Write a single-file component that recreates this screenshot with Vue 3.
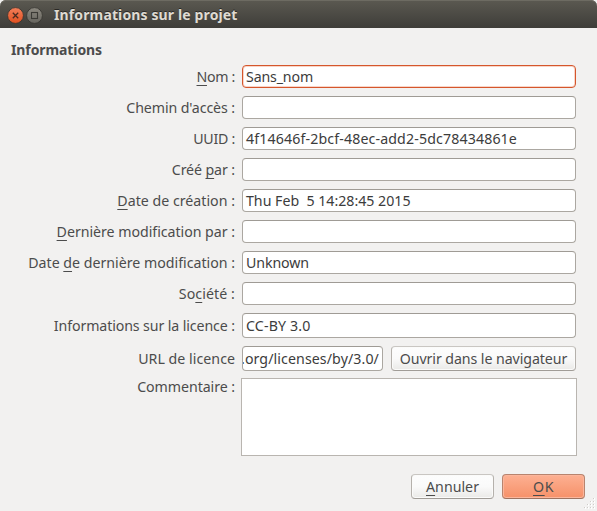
<script setup>
const rows = [
  { pre: '', key: 'N', post: 'om :', w: 38.5, value: 'Sans_nom', vw: 67, focus: true },
  { pre: "Chemin d'accès :", w: 108.7, value: '' },
  { pre: 'UUID :', w: 41.8, value: '4f14646f-2bcf-48ec-add2-5dc78434861e', vw: 271 },
  { pre: 'Créé ', key: 'p', post: 'ar :', w: 63.2, value: '' },
  { pre: '', key: 'D', post: 'ate de création :', w: 117.7, value: 'Thu Feb  5 14:28:45 2015', vw: 164.5 },
  { pre: '', key: 'D', post: 'ernière modification par :', w: 178.4, value: '' },
  { pre: 'Date ', key: 'd', post: 'e dernière modification :', w: 206.8, value: 'Unknown', vw: 63 },
  { pre: 'So', key: 'c', post: 'iété :', w: 56.2, value: '' },
  { pre: 'Informations sur la licence :', w: 181.2, value: 'CC-BY 3.0', vw: 64.5, tall: true }
]

// Tracks a text run so that it fills the given width in pixels.
const vFit = {
  mounted(el, { value }) {
    if (!value) return
    const apply = () => {
      el.style.letterSpacing = '0px'
      const natural = el.getBoundingClientRect().width
      el.style.letterSpacing = `${(value - natural) / el.textContent.length}px`
    }
    apply()
    document.fonts?.ready.then(apply)
  }
}
</script>

<template>
  <div class="window">
    <header class="titlebar">
      <svg class="controls" width="40" height="20" viewBox="0 0 40 20">
        <defs>
          <linearGradient id="close" x1="0" y1="0" x2="0" y2="1">
            <stop offset="0" stop-color="#f37f5a" />
            <stop offset="1" stop-color="#e2501f" />
          </linearGradient>
          <linearGradient id="max" x1="0" y1="0" x2="0" y2="1">
            <stop offset="0" stop-color="#8b887f" />
            <stop offset="1" stop-color="#67655e" />
          </linearGradient>
        </defs>
        <circle cx="10.5" cy="10.5" r="7.9" fill="url(#close)" stroke="#35342f" stroke-width=".8" />
        <path d="M7.8 7.8l5.4 5.4M13.2 7.8l-5.4 5.4" stroke="#4a2b20" stroke-width="1.3" />
        <circle cx="29.5" cy="10.5" r="7.9" fill="url(#max)" stroke="#35342f" stroke-width=".8" />
        <rect x="26.5" y="7.5" width="6" height="6" fill="none" stroke="#3b3a35" stroke-width="1.1" />
      </svg>
      <span v-fit="183.5" class="title">Informations sur le projet</span>
    </header>

    <main class="content">
      <h1 class="heading"><span v-fit="91">Informations</span></h1>

      <div class="form">
        <div v-for="(r, i) in rows" :key="i" class="row">
          <label class="label"><span v-fit="r.w" class="text">{{ r.pre }}<u v-if="r.key">{{ r.key }}</u>{{ r.post }}</span></label>
          <div class="field" :class="{ focus: r.focus, tall: r.tall }"><span v-fit="r.vw" class="text">{{ r.value }}</span></div>
        </div>
        <div class="row">
          <label class="label"><span v-fit="96.8" class="text">URL de licence</span></label>
          <div class="field tall url"><span v-fit="138" class="text">.org/licenses/by/3.0/</span></div>
          <button class="button browse"><span v-fit="167.5" class="text">Ouvrir dans le navigateur</span></button>
        </div>
        <div class="row comment">
          <label class="label"><span v-fit="97.8" class="text">Commentaire :</span></label>
          <div class="area"></div>
        </div>
      </div>

      <footer class="actions">
        <button class="button"><span v-fit="53" class="text"><u>A</u>nnuler</span></button>
        <button class="button primary"><span v-fit="21" class="text"><u>O</u>K</span></button>
      </footer>
    </main>

    <svg class="grip" width="12" height="12" viewBox="0 0 12 12">
      <path d="M10 1h1M7 4h1M10 4h1M4 7h1M7 7h1M10 7h1M1 10h1M4 10h1M7 10h1M10 10h1" stroke="#fff" stroke-width="2" />
      <path d="M9 .5h1M6 3.5h1M9 3.5h1M3 6.5h1M6 6.5h1M9 6.5h1M0 9.5h1M3 9.5h1M6 9.5h1M9 9.5h1" stroke="#cfccc8" />
    </svg>
  </div>
</template>

<style>
body {
  background: #f2f1f0;
}
</style>

<style scoped>
.window {
  position: relative;
  box-sizing: border-box;
  width: 597px;
  height: 511px;
  overflow: hidden;
  background: #f2f1f0;
  color: #4c4c4c;
  font: 14.2px/20px "Noto Sans", "Open Sans", sans-serif;
}
.titlebar {
  box-sizing: border-box;
  display: flex;
  align-items: center;
  height: 28px;
  padding: 1px 0 0 5px;
  border-radius: 6px 6px 0 0;
  background: linear-gradient(#5b5951, #3e3d39);
  box-shadow: inset 0 1px #6d6b62;
}
.controls {
  flex: none;
  margin-right: 9px;
}
.title {
  color: #dfdbd2;
  font-size: 14px;
  font-weight: 700;
  white-space: pre;
  text-shadow: 0 -1px #292825;
}
.content {
  padding: 12px 12px 0 11px;
}
.heading {
  display: flex;
  height: 20px;
  margin: 0 0 5px;
  font-size: 14px;
  line-height: 20px;
  font-weight: 700;
}
.form {
  display: flex;
  flex-direction: column;
  gap: 8px;
}
.row {
  display: flex;
  align-items: center;
}
.text {
  white-space: pre;
}
u {
  text-decoration: underline 1px;
  text-underline-offset: 3px;
  text-decoration-skip-ink: none;
}
.label {
  display: flex;
  justify-content: flex-end;
  flex: none;
  width: 224px;
  margin-right: 7px;
}
.field {
  box-sizing: border-box;
  display: flex;
  align-items: center;
  width: 334px;
  height: 23px;
  padding: 0 3px;
  overflow: hidden;
  border: 1px solid #aba7a1;
  border-top-color: #9f9b95;
  border-radius: 4px;
  background: #fff;
  color: #3c3c3c;
}
.field.tall {
  height: 25px;
}
.field.focus {
  border-color: #d5562c;
  box-shadow: inset 0 0 0 1px #f8d5c8;
}
.field.url {
  justify-content: flex-end;
  width: 141px;
  margin-right: 8px;
}
.button {
  box-sizing: border-box;
  display: flex;
  align-items: center;
  justify-content: center;
  width: 83px;
  height: 25px;
  padding: 0;
  border: 1px solid #b5b1ac;
  border-top-color: #c9c6c2;
  border-bottom-color: #a09c97;
  border-radius: 4px;
  background: linear-gradient(#fdfdfd, #fafafa 50%, #eae9e7);
  box-shadow: inset 0 0 0 1px #fbfbfa;
  color: #4c4c4c;
  font: inherit;
}
.button.browse {
  width: 185px;
}
.button.primary {
  border-color: #b8846e;
  border-bottom-color: #9d725f;
  background: linear-gradient(#fdb092, #f69169);
  box-shadow: inset 0 0 0 1px #fbb69c;
}
.row.comment {
  align-items: flex-start;
  margin-top: -1px;
}
.comment .label {
  margin: -1px 6px 0 0;
}
.area {
  box-sizing: border-box;
  width: 336px;
  height: 78px;
  border: 1px solid #b9b5b0;
  background: #fff;
}
.actions {
  display: flex;
  justify-content: flex-end;
  gap: 8px;
  margin-top: 18px;
}
.grip {
  position: absolute;
  right: 1px;
  bottom: 1px;
}
</style>
